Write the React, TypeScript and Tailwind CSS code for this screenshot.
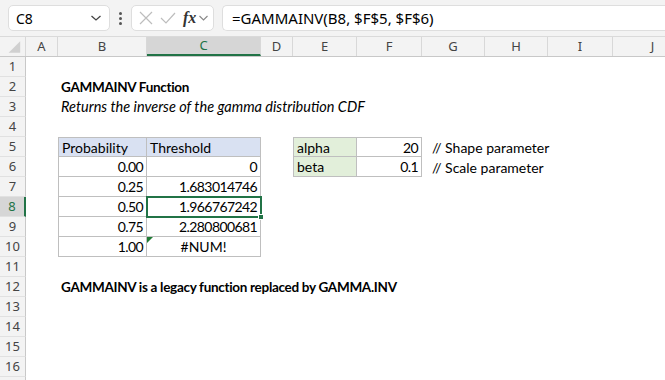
import React from "react";

const W = [26, 32, 89, 114, 32, 64, 65, 63, 63, 65, 80];
const LETTERS = ["", "A", "B", "C", "D", "E", "F", "G", "H", "I", "J"];
const cellFont = { fontFamily: "Lato, 'Liberation Sans', sans-serif" };

type Cell = {
  text?: string;
  cls?: string;
  size?: string;
  align?: "l" | "r" | "c";
};

function Row({ n, cells, sel }: { n: number; cells: Record<number, Cell>; sel?: boolean }) {
  return (
    <div className="flex h-[20px]">
      <div
        className={
          "w-[26px] shrink-0 flex items-center justify-center text-[13px] border-b border-[#e1e1e1] " +
          (sel
            ? "bg-[#d6d6d6] text-[#217346] border-r-2 border-r-[#217346]"
            : "bg-[#f3f3f3] text-[#444] border-r border-r-[#c8c8c8]")
        }
        style={{ fontFamily: "'Noto Sans', sans-serif" }}
      >
        {n}
      </div>
      {W.slice(1).map((w, i) => {
        const c = cells[i + 1];
        return (
          <div
            key={i}
            style={{ width: w, ...cellFont }}
            className={
              "shrink-0 relative h-[20px] flex items-center text-black whitespace-nowrap px-[3px] " +
              (c?.size ?? "text-[14px]") +
              " " +
              (c?.align === "r" ? "justify-end tracking-[-0.6px] " : c?.align === "c" ? "justify-center " : "") +
              (c?.cls ?? "")
            }
          >
            {c?.text}
          </div>
        );
      })}
    </div>
  );
}

export default function App() {
  const tb = "border-[#bfbfbf]";
  const rows: Record<number, Record<number, Cell>> = {
    2: { 2: { text: "GAMMAINV Function", size: "text-[13.5px]", cls: "font-bold tracking-[-0.3px]" } },
    3: { 2: { text: "Returns the inverse of the gamma distribution CDF", size: "text-[14.5px]", cls: "italic" } },
    5: {
      2: { text: "Probability", cls: `bg-[#d9e1f2] border ${tb}` },
      3: { text: "Threshold", cls: `bg-[#d9e1f2] border-t border-r border-b ${tb}` },
      5: { text: "alpha", cls: `bg-[#e2efda] border ${tb}` },
      6: { text: "20", align: "r", cls: `border-t border-r border-b ${tb}` },
      7: { text: "// Shape parameter", cls: "text-[#404040] pl-[10px]" },
    },
    6: {
      2: { text: "0.00", align: "r", cls: `border-l border-r border-b ${tb}` },
      3: { text: "0", align: "r", cls: `border-r border-b ${tb}` },
      5: { text: "beta", cls: `bg-[#e2efda] border-l border-r border-b ${tb}` },
      6: { text: "0.1", align: "r", cls: `border-r border-b ${tb}` },
      7: { text: "// Scale parameter", cls: "text-[#404040] pl-[10px]" },
    },
    7: {
      2: { text: "0.25", align: "r", cls: `border-l border-r border-b ${tb}` },
      3: { text: "1.683014746", align: "r", cls: `border-r border-b ${tb}` },
    },
    8: {
      2: { text: "0.50", align: "r", cls: `border-l border-r border-b ${tb}` },
      3: { text: "1.966767242", align: "r", cls: `border-r border-b ${tb}` },
    },
    9: {
      2: { text: "0.75", align: "r", cls: `border-l border-r border-b ${tb}` },
      3: { text: "2.280800681", align: "r", cls: `border-r border-b ${tb}` },
    },
    10: {
      2: { text: "1.00", align: "r", cls: `border-l border-r border-b ${tb}` },
      3: { text: "#NUM!", align: "c", cls: `border-r border-b ${tb}` },
    },
    12: { 2: { text: "GAMMAINV is a legacy function replaced by GAMMA.INV", size: "text-[13.5px]", cls: "font-bold tracking-[-0.3px]" } },
  };

  return (
    <div className="w-[665px] h-[380px] overflow-hidden bg-white relative">
      {/* Toolbar */}
      <div className="h-[37px] bg-[#f3f3f3] flex items-center pl-[8px] border-b border-[#dadada]" style={{ fontFamily: "'Noto Sans', sans-serif" }}>
        <div className="w-[102px] h-[26px] bg-white border border-[#dedede] rounded-[5px] flex items-center justify-between pl-[7px] pr-[7px]">
          <span className="text-[14px] text-black">C8</span>
          <svg width="12" height="8" viewBox="0 0 12 8"><path d="M1.5 2 L6 6 L10.5 2" stroke="#444" strokeWidth="1.3" fill="none" /></svg>
        </div>
        <div className="w-[21px] flex flex-col items-center gap-[2px]">
          <div className="w-[3px] h-[3px] rounded-full bg-[#555]" />
          <div className="w-[3px] h-[3px] rounded-full bg-[#555]" />
          <div className="w-[3px] h-[3px] rounded-full bg-[#555]" />
        </div>
        <div className="w-[83px] h-[26px] bg-white border border-[#dedede] rounded-[5px] flex items-center pl-[5px]">
          <svg width="16" height="16" viewBox="0 0 16 16" className="ml-[1px]"><path d="M2 2 L14 14 M14 2 L2 14" stroke="#bdbdbd" strokeWidth="1.2" /></svg>
          <svg width="18" height="16" viewBox="0 0 18 16" className="ml-[5px]"><path d="M2 8 L7 13 L16 3" stroke="#bdbdbd" strokeWidth="1.2" fill="none" /></svg>
          <span className="ml-[6px] text-[16px] italic font-bold text-[#333]" style={{ fontFamily: "'Liberation Serif', serif" }}>fx</span>
          <svg width="11" height="8" viewBox="0 0 11 8" className="ml-[2px]"><path d="M1.5 2 L5.5 6 L9.5 2" stroke="#888" strokeWidth="1.1" fill="none" /></svg>
        </div>
        <div className="ml-[8px] flex-1 h-[26px] bg-white border border-[#dedede] rounded-l-[5px] border-r-0 flex items-center pl-[9px]">
          <span className="text-[15px] text-black">=GAMMAINV(B8, $F$5, $F$6)</span>
        </div>
      </div>
      {/* Column headers */}
      <div className="flex h-[20px] bg-[#f3f3f3] border-b border-[#c8c8c8]" style={{ fontFamily: "'Noto Sans', sans-serif" }}>
        {W.map((w, i) => (
          <div
            key={i}
            style={{ width: w }}
            className={
              "shrink-0 flex items-center justify-center text-[13px] border-r border-[#d8d8d8] " +
              (i === 3 ? "bg-[#d6d6d6] text-[#217346] border-b-2 border-b-[#217346]" : "text-[#444]")
            }
          >
            {i === 0 ? (
              <svg width="26" height="20" viewBox="0 0 26 20"><path d="M21 4 L21 16 L9 16 Z" fill="#d0d0d0" /></svg>
            ) : (
              LETTERS[i]
            )}
          </div>
        ))}
      </div>
      {/* Rows */}
      <div className="relative">
        {Array.from({ length: 16 }, (_, k) => k + 1).map((n) => (
          <Row key={n} n={n} cells={rows[n] ?? {}} sel={n === 8} />
        ))}
        <div className="flex h-[20px]">
          <div className="w-[26px] shrink-0 bg-[#f3f3f3] border-r border-[#c8c8c8]" />
        </div>
        {/* selection box C8 */}
        <div className="absolute left-[146px] top-[139px] w-[116px] h-[22px] border-2 border-[#217346] pointer-events-none" />
        <div className="absolute left-[258px] top-[157px] w-[6px] h-[6px] bg-[#217346] border border-white" />
        {/* error triangle C10 */}
        <svg className="absolute left-[147px] top-[180px]" width="6" height="6" viewBox="0 0 6 6"><path d="M0 0 L6 0 L0 6 Z" fill="#1e7b34" /></svg>
      </div>
    </div>
  );
}
